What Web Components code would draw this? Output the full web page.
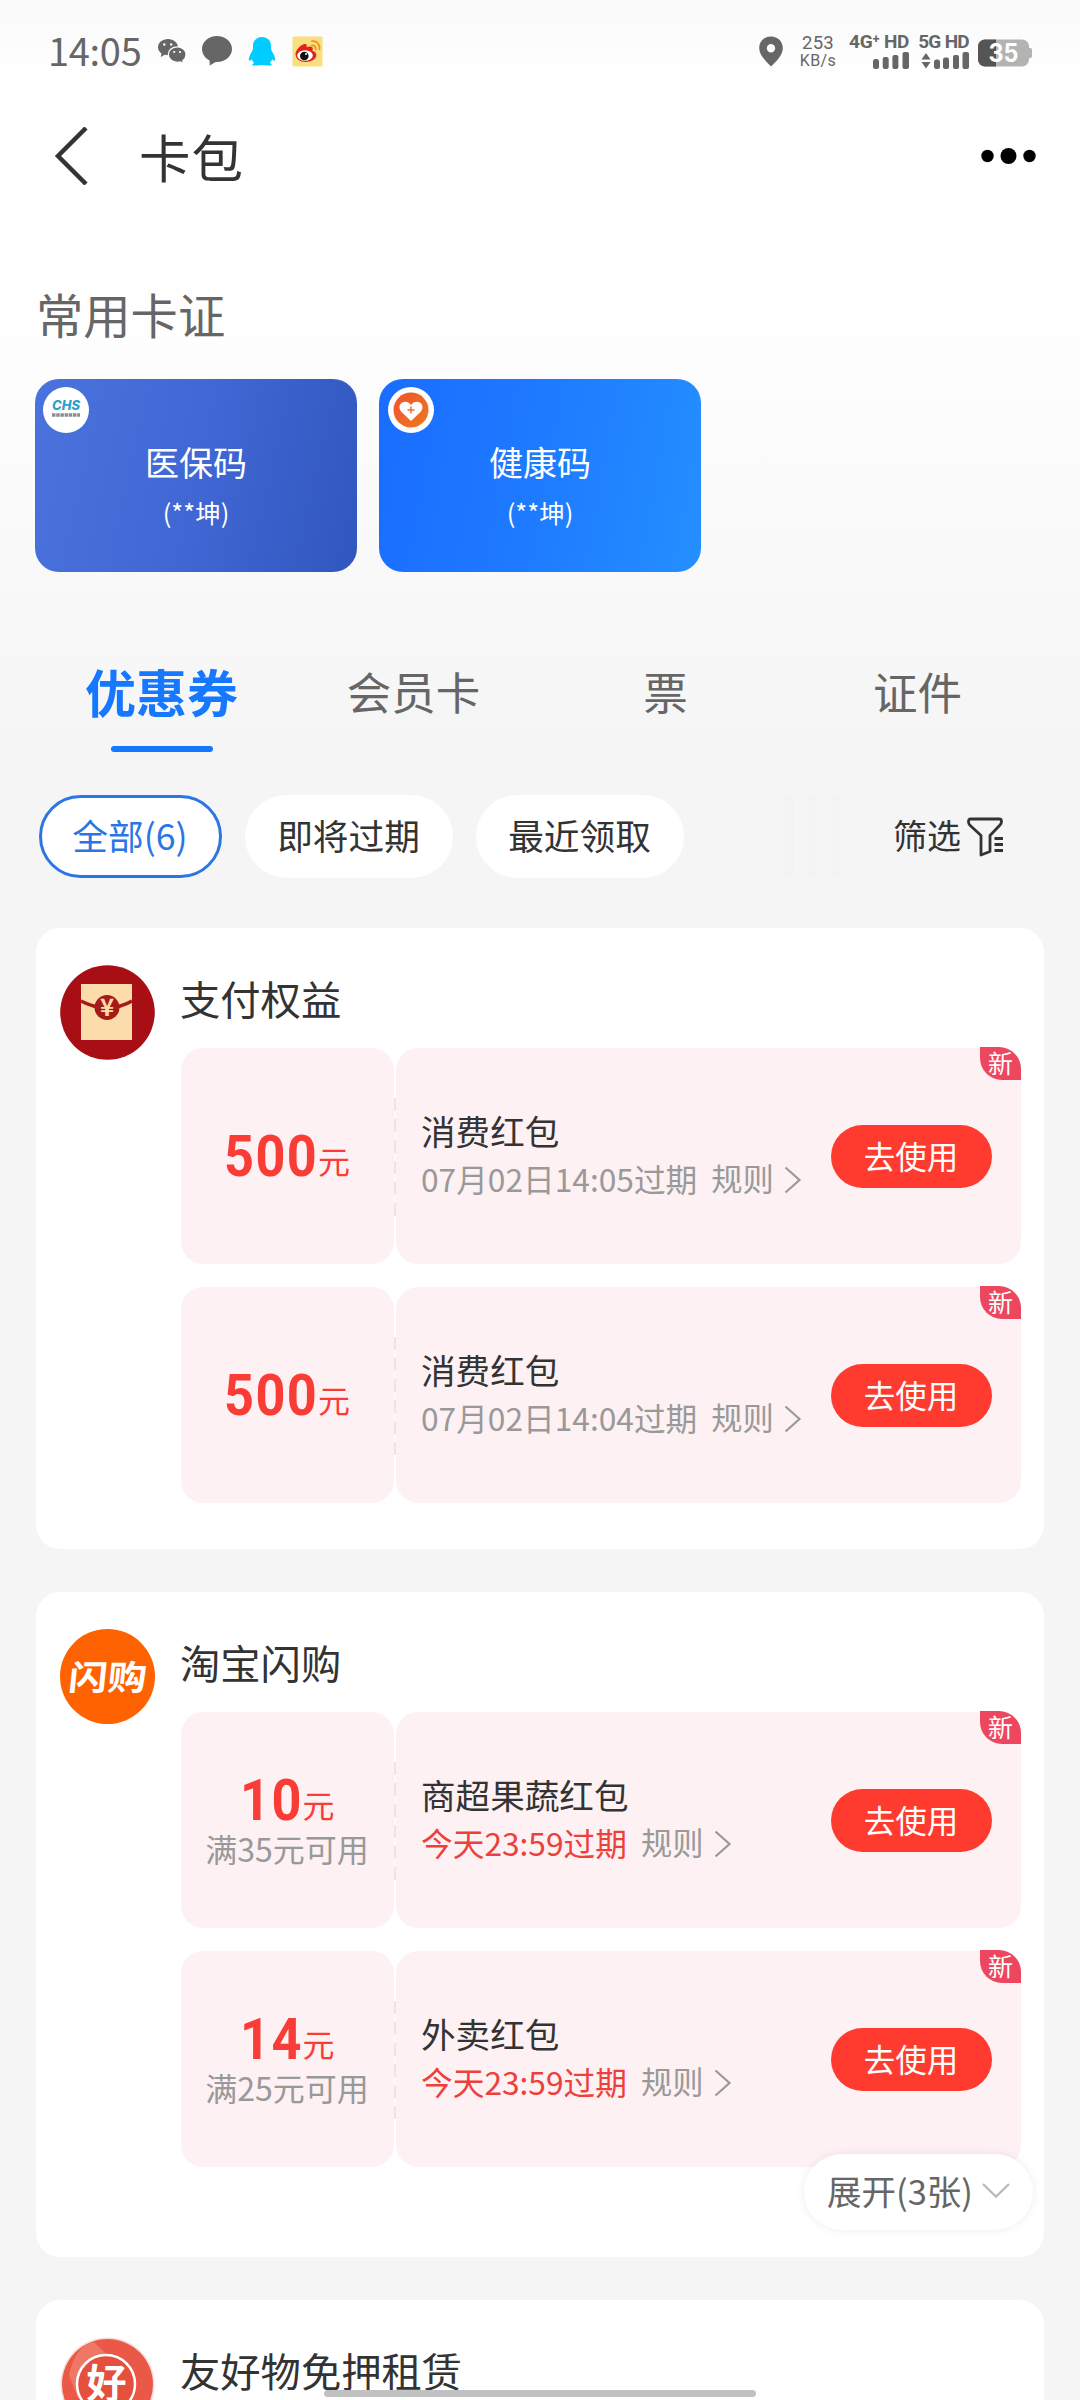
<!DOCTYPE html>
<html lang="zh-CN">
<head>
<meta charset="utf-8">
<title>卡包</title>
<style>
html,body{margin:0;padding:0}
body{width:1080px;height:2400px;overflow:hidden;font-family:"Noto Sans CJK SC","Noto Sans",sans-serif;color:#333}
</style>
</head>
<body>
<wallet-page></wallet-page>
<script>
const define = (name, render) => customElements.define(name, class extends HTMLElement {
  constructor() {
    super();
    const t = document.createElement('template');
    t.innerHTML = '<style>*{box-sizing:border-box}svg{display:block;flex:none}</style>' + render(this);
    this.attachShadow({mode: 'open'}).append(t.content.cloneNode(true));
  }
});

define('status-bar', () => `
<style>
:host{box-sizing:border-box;display:flex;height:102px;padding:0 48px 0 48px;align-items:center;color:#666}
.time{width:110px;font-size:38px;line-height:38px;padding-bottom:3px;letter-spacing:-.3px}
.left{display:flex;align-items:center;flex:1}
.right{display:flex;align-items:center;font-family:Roboto,"Noto Sans",sans-serif}
.net{width:36px;margin:1px 15px 0 17px;font-size:16px;line-height:16px;display:flex;flex-direction:column;align-items:center;gap:1px;white-space:nowrap;letter-spacing:.4px}
.net b{font-weight:400;font-size:18.500px;line-height:17px;letter-spacing:.3px}
.sim{display:flex;flex-direction:column;gap:3px;height:34px;white-space:nowrap}
.sim span{font-weight:700;font-size:19px;line-height:15px}
</style>
<div class="left">
 <div class="time">14:05</div>
 <svg width="28" height="26" viewBox="0 0 28 26" fill="#666"><path d="M10 1C4.500 1 0 4.600 0 9.200c0 2.600 1.400 4.700 3.500 6.200L2.800 19l4-2.200c1.100.3 2 .4 3.200.4C15.500 17.200 20 13.700 20 9.200S15.500 1 10 1z"/><path d="M19.300 8.800c-5 0-9 3.500-9 7.800s4 7.800 9 7.800c1.100 0 2-.2 3-.5l3.200 1.900-.7-3c2-1.500 3.300-3.700 3.300-6.200 0-4.300-4-7.800-8.800-7.800z" stroke="#fff" stroke-width="1.300"/><g fill="#fff"><circle cx="6.300" cy="6.500" r="1.200"/><circle cx="13.200" cy="6.500" r="1.200"/><circle cx="16.200" cy="14" r="1.100"/><circle cx="22" cy="14" r="1.100"/></g></svg>
 <svg style="margin-left:16px" width="30" height="30" viewBox="0 0 30 30" fill="#666"><path d="M15 0C6.700 0 0 5.800 0 13c0 5 3.200 9.200 7.600 11.600L7.700 29.500l6-3.500H15c8.300 0 15-5.800 15-13S23.300 0 15 0z"/></svg>
 <svg style="margin-left:16px" width="28" height="30" viewBox="0 0 28 30" fill="#0cf"><path d="M14 1C8.600 1 5 4.700 5 10v2c0 2-1 3.400-2.300 5.700C1.200 20.300.3 24 1.300 24.700c.7.400 1.800-.6 2.500-1.800.4 1.700 1.300 3 2.500 4.200-1.300.5-2 1.100-2 1.600 0 1.300 4.200 1 8 .3h3.400c3.800.7 8 1 8-.3 0-.5-.7-1.100-2-1.600 1.200-1.200 2.100-2.500 2.500-4.200.7 1.200 1.800 2.200 2.500 1.800 1-.7.100-4.400-1.400-7C24 15.400 23 14 23 12v-2c0-5.300-3.600-9-9-9z"/></svg>
 <svg style="margin-left:16px" width="31" height="31" viewBox="0 0 31 31"><rect x=".5" y=".5" width="30" height="30" rx="1.500" fill="#f9df7f"/><path d="M3.500 18c0-4.700 7-11 10.200-10 1.300.4 1.300 2 .8 3.300 2.500-1.200 6.300-1.600 6.300 1.600 0 .8-.3 1.400-.4 1.800 2.700.8 4 2.300 4 4.300 0 4-5 7-10.600 7C8 26 3.500 23 3.500 18z" fill="#e2231a"/><ellipse cx="13" cy="19.500" rx="7.800" ry="5.200" fill="#fff"/><circle cx="12.300" cy="20" r="4.300" fill="#111"/><circle cx="14" cy="18" r="1" fill="#fff"/><path d="M20 9.500c2.500-.3 4 1.500 3.600 4M20 5.200c4.800-.6 8.300 3.300 7.400 8.200" fill="none" stroke="#f3931e" stroke-width="1.800" stroke-linecap="round"/></svg>
</div>
<div class="right">
 <svg width="24" height="31" viewBox="0 0 24 31"><path fill="#666" fill-rule="evenodd" d="M12 .5C5.200.5.200 5.500.200 12 .2 19.500 7.500 26 12 30.500 16.500 26 23.800 19.500 23.800 12 23.800 5.500 18.800.5 12 .5zM12 8a4.200 4.200 0 1 1 0 8.400A4.200 4.200 0 0 1 12 8z"/></svg>
 <div class="net"><b>253</b><span>KB/s</span></div>
 <div class="sim" style="width:58px;align-items:flex-end"><span style="letter-spacing:-.35px">4G⁺ HD</span>
  <svg width="36" height="17" viewBox="0 0 36 17" fill="#666"><rect y="7" width="6" height="10" rx="2.500"/><rect x="9.700" y="5" width="6" height="12" rx="2"/><rect x="19.400" y="3" width="6" height="14" rx="2"/><rect x="29.500" width="6.500" height="17" rx="2"/></svg></div>
 <div class="sim" style="width:49px;margin-left:11px;align-items:flex-end"><span style="letter-spacing:-.7px">5G HD</span>
  <svg width="48" height="17" viewBox="0 0 48 17" fill="#666"><path d="M5 1l4.500 6.500h-9zM5 16.500.5 10h9z"/><rect x="13" y="7.500" width="6" height="9.500" rx="2.500"/><rect x="22" y="5.500" width="6" height="11.500" rx="2"/><rect x="32" y="3" width="6" height="14" rx="2"/><rect x="41.500" width="6.500" height="17" rx="2"/></svg></div>
 <svg style="margin:3px 0 0 9px" width="54" height="28" viewBox="0 0 54 28"><defs><clipPath id="b"><rect y=".5" width="51" height="27" rx="7"/></clipPath></defs><g clip-path="url(#b)"><rect width="54" height="28" fill="#b3b3b3"/><rect width="18" height="28" fill="#555"/></g><path d="M51 9h1.500q1.500 0 1.500 2v6q0 2-1.500 2H51z" fill="#b3b3b3"/><text x="25.500" y="23" text-anchor="middle" font-family="Inter,Roboto,sans-serif" font-size="25" font-weight="700" textLength="30" lengthAdjust="spacingAndGlyphs" fill="#fff">35</text></svg>
</div>`);

define('nav-header', () => `
<style>
:host{box-sizing:border-box;display:flex;height:108px;align-items:center;padding:0 44px 0 54px}
.t{flex:1;margin-left:50px;font-size:51.500px;line-height:60px;color:#333;letter-spacing:1px}
</style>
<svg width="35" height="58" viewBox="0 0 35 58"><path d="M32 1 4 29l28 28" fill="none" stroke="#333" stroke-width="4.500"/></svg>
<div class="t"><slot></slot></div>
<svg width="55" height="16" viewBox="0 0 55 16"><circle cx="6.500" cy="8" r="6.200"/><circle cx="27.500" cy="8" r="8"/><circle cx="48.500" cy="8" r="6.200"/></svg>`);

define('cert-card', el => `
<style>
:host{box-sizing:border-box;display:flex;flex-direction:column;align-items:center;position:relative;width:322px;height:193px;border-radius:24px;padding-top:66px;color:#fff;background:${el.getAttribute('kind') === 'chs'
  ? 'linear-gradient(103deg,#4b73dd,#4067d4 50%,#3156be)' : 'linear-gradient(100deg,#1a6dff,#1e7bff 50%,#248fff)'}}
.n{font-size:34px;line-height:34px}
.s{font-size:25.500px;line-height:26px;margin-top:20px}
svg{position:absolute;left:8px;top:8px}
</style>
${el.getAttribute('kind') === 'chs'
  ? '<svg width="46" height="46" viewBox="0 0 46 46"><circle cx="23" cy="23" r="23" fill="#fff"/><text x="23" y="23" text-anchor="middle" font-family="Inter,sans-serif" font-style="italic" font-weight="800" font-size="13" textLength="28" lengthAdjust="spacingAndGlyphs" fill="#2f9fcb">CHS</text><g stroke="#8b8f92" stroke-width="3.500"><path d="M9 28h28" stroke-dasharray="3.500 .7"/></g></svg>'
  : '<svg style="left:9px" width="46" height="46" viewBox="0 0 46 46"><defs><linearGradient id="g" x2="1" y2="1"><stop stop-color="#f4502a"/><stop offset="1" stop-color="#ea7b20"/></linearGradient></defs><circle cx="23" cy="23" r="23" fill="#fff"/><circle cx="23" cy="23" r="17.500" fill="url(#g)"/><path d="M23 34 13.500 25c-3-3.500-2.500-8 .7-9.600 3.300-1.600 6.800-.4 8.800 2.600 2-3 5.500-4.200 8.800-2.600 3.200 1.600 3.700 6.100.7 9.600z" fill="#fff"/><path d="M23 19.500v7M19.500 23h7" stroke="#ef6b3a" stroke-width="1.500"/></svg>'}
<div class="n"><slot></slot></div><div class="s">(**坤)</div>`);

define('tab-item', el => `
<style>
:host{display:flex;flex-direction:column;align-items:center;flex:1;gap:4px;font-size:44.500px;line-height:102px;color:#666}
:host([active]){font-size:51px;font-weight:700;color:#1677ff}
div{padding-right:1px}
i{width:102px;height:6px;border-radius:3px}
:host([active]) i{background:#1677ff}
</style><div><slot></slot></div><i></i>`);

define('filter-pill', () => `
<style>
:host{display:flex;align-items:center;justify-content:center;box-sizing:border-box;height:83px;width:208px;border-radius:42px;background:#fff;padding:0 1px 3px 0;font-size:35.700px;line-height:40px;color:#333;white-space:nowrap}
:host([active]){width:183px;border:3px solid #2a76e4;color:#2a76e4}
</style><slot></slot>`);

define('filter-bar', () => `
<style>
:host{box-sizing:border-box;display:flex;align-items:center;padding:0 77px 0 39px;height:83px}
.p{display:flex;gap:23px;flex:1}
.fade{width:56px;height:81px;margin-right:52px;background:linear-gradient(90deg,#f3f3f3 0 9px,transparent 9px 16px,#f4f4f4 16px 18px,transparent 18px 24px,#f3f3f3 24px 32px,transparent 32px 40px,#f4f4f4 40px 42px,transparent 42px 47px,#f3f3f3 47px 56px)}
.f{font-size:34px;line-height:40px;padding-bottom:3px;color:#333;margin-right:6px}
</style>
<div class="p"><filter-pill active>全部(6)</filter-pill><filter-pill>即将过期</filter-pill><filter-pill>最近领取</filter-pill></div>
<div class="fade"></div>
<div class="f">筛选</div>
<svg width="36" height="40" viewBox="0 0 36 40" fill="none" stroke="#333" stroke-width="2.800" stroke-linejoin="round"><path d="M3.500 2h29q2 0 2 2.500 0 2-1.500 3.500L23 18.500v16l-9 3.500V18.500L2.700 8Q1.500 6.500 1.500 4.500 1.500 2 3.500 2z"/><path d="M27.500 21.500H36M27.500 27.500H36M27.500 33.500H36"/></svg>`);

const logos = {
  pay: '<circle cx="47.500" cy="47.500" r="47.300" fill="#a80f14"/><path d="M21 19h51v56H21z" fill="#fcdcab"/><path d="M21 36q12 6.500 26 7 14-.5 25-7" fill="none" stroke="#a51b17" stroke-width="3.500"/><circle cx="47" cy="42.500" r="12.500" fill="#a51b17"/><text x="47" y="51" text-anchor="middle" font-family="Noto Sans CJK SC,sans-serif" font-size="24" font-weight="700" fill="#fcdcab">¥</text>',
  flash: '<circle cx="47.500" cy="47.500" r="47.500" fill="#ff6200"/><text transform="translate(46.500 60.500) skewX(-6) scale(1 .88)" text-anchor="middle" font-family="Noto Sans CJK SC,sans-serif" font-size="39" font-weight="700" fill="#fff">闪购</text>',
  good: '<circle cx="47.500" cy="47.500" r="47" fill="#f9dcd7"/><circle cx="47.500" cy="47.500" r="45.500" fill="#ea5947"/><path d="M9 38C14 17 22 7 34 5l20 20-36 36z" fill="#ef7768"/><circle cx="46" cy="47" r="29" fill="#e44f3e" stroke="#fff" stroke-width="2.500"/><text x="46.500" y="61" text-anchor="middle" font-family="Noto Sans CJK SC,sans-serif" font-size="40" font-weight="700" fill="#fff">好</text>'
};

define('coupon-group', el => `
<style>
:host{display:flex;flex:none;box-sizing:border-box;width:1008px;background:#fff;border-radius:24px;padding:37px 23px 46px 24px;gap:26px;position:relative}
:host([expand]){padding-bottom:90px}
.r{flex:1;display:flex;flex-direction:column;padding-top:13px}
h2{margin:0 0 30px -1px;font-size:40.300px;line-height:40px;font-weight:400;color:#333}
.l{display:flex;flex-direction:column;gap:23px}
</style>
<svg width="95" height="95" viewBox="0 0 95 95">${logos[el.getAttribute('logo')]}</svg>
<div class="r"><h2>${el.getAttribute('name')}</h2><div class="l"><slot></slot></div></div><slot name="more"></slot>`);

define('coupon-item', el => {
  const a = n => el.getAttribute(n) || '';
  return `
<style>
:host{display:flex;gap:2px;height:216px;position:relative}
.a,.b{background:#fdf1f3;border-radius:22px;display:flex}
.a{width:213px;flex-direction:column;align-items:center;justify-content:center;gap:8px;padding-right:1px}
.m{display:flex;align-items:center;color:#fa3c36;font-size:32px;line-height:32px}
.m span{padding-top:7px}
.m b{font:700 58px/48px Roboto,sans-serif;letter-spacing:1.600px;transform:scaleX(.9);transform-origin:0 50%;margin-right:${-a('amount').length * 3.5}px}
.c{font-size:32px;line-height:32px;color:#999;white-space:nowrap}
.b{flex:1;align-items:center;padding:0 29px 0 25px;justify-content:space-between}
.x{display:flex;flex-direction:column;gap:12px;padding-bottom:4px;white-space:nowrap}
.t{font-size:34.600px;line-height:36px;color:#333}
.d{display:flex;align-items:center;font-size:31.700px;line-height:36px;color:#999}
.d span:first-child{color:${el.hasAttribute('today') ? '#ee403b' : '#999'};margin-right:14px}
.d span:nth-child(2){font-size:31.300px}
.d svg{margin:4px 0 0 10px}
.go{width:161px;height:63px;border-radius:32px;background:#ff3b2f;color:#fff;font-size:31.500px;line-height:60px;text-align:center;padding-right:1px}
.new{position:absolute;right:0;top:-1px;width:41px;height:33px;border-radius:0 22px 0 22px;background:#ec475f;color:#fff;font-size:25px;line-height:30px;text-align:center}
.dash{position:absolute;left:213px;top:50px;width:2px;height:118px;background:repeating-linear-gradient(#f5e1e4 0 13px,#fff8f9 13px 21px)}
</style>
<div class="a"><div class="m"><b>${a('amount')}</b><span>元</span></div>${a('cond') ? `<div class="c">${a('cond')}</div>` : ''}</div>
<div class="b"><div class="x"><div class="t">${a('name')}</div><div class="d"><span>${a('due')}</span><span>规则</span><svg width="18" height="28" viewBox="0 0 18 28"><path d="M1.500 1.500 15.500 14l-14 12.500" fill="none" stroke="#999" stroke-width="2.200"/></svg></div></div><div class="go">去使用</div></div>
<div class="dash"></div><div class="new">新</div>`;
});

define('expand-button', () => `
<style>
:host{position:absolute;right:11px;bottom:27px;box-sizing:border-box;width:229px;height:76px;border-radius:38px;background:#fff;box-shadow:0 0 10px rgba(0,0,0,.08);display:flex;align-items:center;padding:0 22px 4px 23px;justify-content:space-between;font-size:34.500px;line-height:40px;color:#666;white-space:nowrap}
</style><span><slot></slot></span><svg width="30" height="17" viewBox="0 0 30 17"><path d="M2 2l13 12.500L28 2" fill="none" stroke="#bbb" stroke-width="2.400"/></svg>`);

define('wallet-page', () => `
<style>
:host{display:flex;flex-direction:column;width:1080px;height:2400px;overflow:hidden;position:relative;background:linear-gradient(#fafafa 0,#fcfcfc 40px,#fff 80px,#fefefe 330px,#f9f9f9 560px,#f5f5f5 760px)}
status-bar,nav-header,filter-bar,.certs,.tabs,.list,h1{flex:none}
h1{margin:80px 0 42px 36px;font-size:47.300px;line-height:47px;font-weight:400;color:#666}
.certs{display:flex;gap:22px;padding-left:35px}
.tabs{display:flex;margin:68px 36px 43px;height:112px}
.list{display:flex;flex-direction:column;align-items:center;gap:43px;margin-top:50px}
.home{position:absolute;left:324px;top:2390px;width:432px;height:7px;border-radius:4px;background:#c1c1c1}
</style>
<status-bar></status-bar>
<nav-header>卡包</nav-header>
<h1>常用卡证</h1>
<div class="certs"><cert-card kind="chs">医保码</cert-card><cert-card kind="health">健康码</cert-card></div>
<div class="tabs"><tab-item active>优惠券</tab-item><tab-item>会员卡</tab-item><tab-item>票</tab-item><tab-item>证件</tab-item></div>
<filter-bar></filter-bar>
<div class="list">
 <coupon-group logo="pay" name="支付权益">
  <coupon-item amount="500" name="消费红包" due="07月02日14:05过期"></coupon-item>
  <coupon-item amount="500" name="消费红包" due="07月02日14:04过期"></coupon-item>
 </coupon-group>
 <coupon-group logo="flash" name="淘宝闪购" expand>
  <coupon-item amount="10" cond="满35元可用" name="商超果蔬红包" due="今天23:59过期" today></coupon-item>
  <coupon-item amount="14" cond="满25元可用" name="外卖红包" due="今天23:59过期" today></coupon-item>
  <expand-button slot="more">展开(3张)</expand-button>
 </coupon-group>
 <coupon-group logo="good" name="友好物免押租赁"></coupon-group>
</div>
<div class="home"></div>`);
</script>
</body>
</html>
